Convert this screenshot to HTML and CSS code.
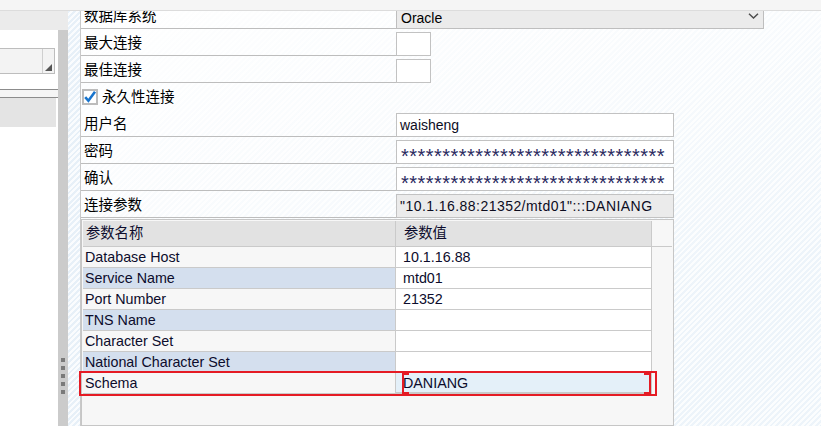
FILE: index.html
```html
<!DOCTYPE html>
<html lang="zh-CN">
<head>
  <meta charset="UTF-8">
  <title>数据库连接</title>
  <link rel="stylesheet" href="styles.css">
</head>
<body>

<div class="topbar"></div>

<div class="workspace">
  <div class="left">
    <div class="left-head"></div>
    <div class="left-main">
      <div class="side">
        <div class="combo">
          <span class="combo-field"></span>
          <span class="combo-btn">
            <svg width="7" height="7" viewBox="0 0 7 7"><path d="M7 0 L7 7 L0 7 Z" fill="#555"/></svg>
          </span>
        </div>
        <div class="side-rule"></div>
        <div class="side-tab"></div>
      </div>
      <div class="splitter">
        <span class="dot"></span>
        <span class="dot"></span>
        <span class="dot"></span>
        <span class="dot"></span>
        <span class="dot"></span>
      </div>
    </div>
  </div>

  <div class="gutter"></div>

  <div class="panel">
    <div class="form">
      <div class="row">
        <div class="label">数据库系统</div>
        <div class="select">
          <span class="select-text">Oracle</span>
          <svg width="11" height="6" viewBox="0 0 11 6"><path d="M1 0.8 L5.5 5 L10 0.8" stroke="#4d4d4d" stroke-width="1.5" fill="none"/></svg>
        </div>
      </div>
      <div class="row">
        <div class="label">最大连接</div>
        <div class="field small"></div>
      </div>
      <div class="row">
        <div class="label">最佳连接</div>
        <div class="field small"></div>
      </div>
      <div class="row">
        <div class="label check">
          <svg width="16" height="16" viewBox="0 0 16 16">
            <rect x="1" y="1" width="14" height="14" fill="#fff" stroke="#bcbcbc" stroke-width="2"/>
            <path d="M3.2 8.2 L6.4 11.8 L13 2.8" stroke="#1874cd" stroke-width="2.6" fill="none"/>
          </svg>
          永久性连接
        </div>
      </div>
      <div class="row">
        <div class="label">用户名</div>
        <div class="field">waisheng</div>
      </div>
      <div class="row">
        <div class="label">密码</div>
        <div class="field secret">********************************</div>
      </div>
      <div class="row">
        <div class="label">确认</div>
        <div class="field secret">********************************</div>
      </div>
      <div class="row">
        <div class="label">连接参数</div>
        <div class="field readonly">"10.1.16.88:21352/mtd01":::DANIANG</div>
      </div>
    </div>

    <div class="grid">
      <div class="grid-table">
        <div class="head name">参数名称</div>
        <div class="head value">参数值</div>
        <div class="head rest"></div>

        <div class="cell name">Database Host</div>
        <div class="cell value">10.1.16.88</div>
        <div class="cell rest"></div>

        <div class="cell name alt">Service Name</div>
        <div class="cell value">mtd01</div>
        <div class="cell rest"></div>

        <div class="cell name">Port Number</div>
        <div class="cell value">21352</div>
        <div class="cell rest"></div>

        <div class="cell name alt">TNS Name</div>
        <div class="cell value"></div>
        <div class="cell rest"></div>

        <div class="cell name">Character Set</div>
        <div class="cell value"></div>
        <div class="cell rest"></div>

        <div class="cell name alt">National Character Set</div>
        <div class="cell value"></div>
        <div class="cell rest"></div>

        <div class="cell name">Schema</div>
        <div class="cell value editing">
          DANIANG
          <span class="mark mark-left"></span>
          <span class="mark mark-right"></span>
        </div>
        <div class="cell rest"></div>
      </div>

      <!-- highlight around the edited row -->
      <div class="highlight"></div>
    </div>
  </div>
</div>

</body>
</html>
```

FILE: styles.css
```css
* {
  box-sizing: border-box;
}

body {
  margin: 0;
  width: 821px;
  height: 426px;
  overflow: hidden;
  font-family: "Liberation Sans", "Noto Sans CJK SC", sans-serif;
  font-size: 14px;
  color: #000;
  background: #fff;
}

.topbar {
  height: 11px;
  background: #f5f5f5;
  border-bottom: 1px solid #dcdcdc;
}

.workspace {
  display: flex;
  height: 415px;
  overflow: hidden;
}

/* left side panel */
.left {
  width: 68px;
  display: flex;
  flex-direction: column;
}

.left-head {
  height: 19px;
  background: #ebebeb;
}

.left-main {
  flex: 1;
  display: flex;
}

.side {
  flex: 1;
  background: #fff;
  padding-top: 18px;
}

.combo {
  display: flex;
  height: 26px;
  margin: 0 3px 0 -2px;
  border: 1px solid #bdbdbd;
  background: #f3f3f3;
}

.combo-field {
  flex: 1;
}

.combo-btn {
  width: 12px;
  border-left: 1px solid #cfcfcf;
  display: flex;
  align-items: flex-end;
  justify-content: flex-end;
  padding: 0 2px 2px 0;
}

.side-rule {
  margin-top: 15px;
  height: 9px;
  border-top: 1px solid #8c8c8c;
  border-bottom: 1px solid #8c8c8c;
  background: #f5f5f5;
}

.side-tab {
  height: 29px;
  margin-right: 2px;
  background: #e4e4e4;
}

.splitter {
  width: 10px;
  background: #cbcbcb;
  display: flex;
  flex-direction: column;
  align-items: center;
  gap: 4px;
  padding-top: 328px;
}

.dot {
  width: 4px;
  height: 4px;
  background: #7a7a7a;
}

.gutter {
  width: 13px;
  border-right: 1px solid #c9c9c9;
  background: repeating-linear-gradient(135deg, #e7f0f8 0 2px, #fafcfe 2px 4px);
}

/* main panel */
.panel {
  flex: 1;
  position: relative;
  display: flex;
  flex-direction: column;
  background:
    linear-gradient(160deg, rgba(255,255,255,.95) 0%, rgba(255,255,255,.6) 40%, rgba(255,255,255,0) 75%),
    repeating-linear-gradient(135deg, #edf4fa 0 2px, #fbfdfe 2px 4px);
}

.form {
  margin-top: -9px;
}

.row {
  display: flex;
  height: 27px;
}

.label {
  width: 315px;
  flex: none;
  padding-left: 3px;
  padding-top: 1px;
  line-height: 26px;
  font-size: 14.5px;
  border-bottom: 1px solid #bdbdbd;
}

.label.check {
  border-bottom: none;
  padding-left: 1px;
  display: flex;
  align-items: center;
  gap: 4px;
}

.select {
  width: 368px;
  height: 26px;
  margin-top: 1px;
  border: 1px solid #bebebe;
  background: #ebebeb;
  display: flex;
  align-items: center;
  justify-content: space-between;
  padding: 0 4px 0 4px;
}

.select-text {
  padding-top: 3px;
}

.field {
  width: 278px;
  height: 24px;
  margin-top: 3px;
  border: 1px solid #c2c2c2;
  background: #fff;
  padding-left: 3px;
  line-height: 22px;
  white-space: nowrap;
  overflow: hidden;
  color: #0c0c1e;
}

.field.small {
  width: 35px;
}

.field.readonly {
  background: #ebebeb;
  letter-spacing: .45px;
}

.field.secret {
  font-size: 20px;
  line-height: 14px;
  padding-top: 8px;
  padding-left: 4px;
  letter-spacing: .47px;
  color: #2a2a60;
}

/* parameter grid */
.grid {
  position: relative;
  flex: 1;
  width: 593px;
  margin-top: 1px;
  border: 1px solid #c6c6c6;
  padding: 1px;
  background: #f7f7f7;
}

.grid-table {
  display: grid;
  grid-template-columns: 313px 256px 20px;
  grid-template-rows: 26px;
  grid-auto-rows: 21px;
  font-size: 14.3px;
  color: #0c0c2c;
}

.head {
  line-height: 25px;
  background: #e2e2e2;
  border-bottom: 1px solid #cacaca;
}

.head.name,
.head.value {
  border-right: 1px solid #cacaca;
}

.head.name {
  padding-left: 3px;
}

.head.value {
  padding-left: 8px;
}

.head.rest {
  background: #f7f7f7;
}

.cell {
  line-height: 21px;
  white-space: nowrap;
}

.cell.name {
  padding-left: 2px;
  background: #f7f7f7;
  border-right: 1px solid #cacaca;
  border-bottom: 1px solid #cacaca;
}

.cell.name.alt {
  background: #d4dfee;
}

.cell.value {
  position: relative;
  padding-left: 7px;
  background: #fff;
  border-right: 1px solid #cacaca;
  border-bottom: 1px solid #cacaca;
}

.cell.value.editing {
  background: #e4f0f9;
  border-bottom: 2px solid #c9c9c9;
  border-right: 3px solid #c9c9c9;
  line-height: 20px;
}

.mark {
  position: absolute;
  top: 0;
  width: 7px;
  height: 21px;
  border: 2px solid #e51b24;
}

.mark-left {
  left: 6px;
  border-right: none;
}

.mark-right {
  right: -2px;
  border-left: none;
}

.highlight {
  position: absolute;
  left: -3px;
  top: 151px;
  width: 578px;
  height: 25px;
  border: 2px solid #e51b24;
}
```
